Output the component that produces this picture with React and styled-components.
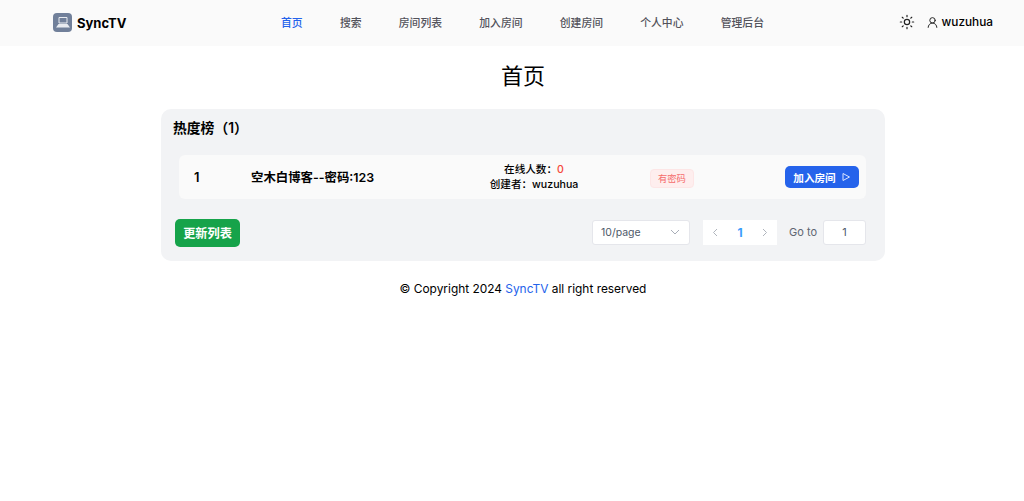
import React from "react";
import styled, { createGlobalStyle } from "styled-components";

const Global = createGlobalStyle`
  html, body { margin: 0; padding: 0; background: #fff; }
  body { font-family: Inter, "Noto Sans CJK SC", "Liberation Sans", sans-serif; color: #000; }
  * { box-sizing: border-box; }
`;
const Page = styled.div`width: 1024px; height: 501px; overflow: hidden;`;
const Header = styled.header`
  height: 46px; background: #fafafa; display: grid;
  grid-template-columns: 1fr auto 1fr; align-items: center; padding: 0 31px 2px 53px;
`;
const Brand = styled.div`display: flex; align-items: center; gap: 5px; font-size: 13px; font-weight: 700; padding-top: 1px;`;
const LogoBox = styled.div`
  width: 19px; height: 19px; border-radius: 4px; background: #71809a;
  display: flex; align-items: center; justify-content: center;
`;
const Nav = styled.nav`display: flex; gap: 37.3px; margin-right: 1px;`;
const NavLink = styled.a`font-size: 10.8px; font-weight: 500; color: ${p => (p.$active ? "#2563eb" : "#52525b")};`;
const Right = styled.div`display: flex; justify-content: flex-end; align-items: center; gap: 11px;`;
const User = styled.div`display: flex; align-items: center; gap: 3px; font-size: 11.8px; font-weight: 500;`;
const Main = styled.main`display: flex; flex-direction: column; align-items: center; padding-left: 22px;`;
const Title = styled.h1`margin: 14px 0 0; font-size: 22px; line-height: 32px; font-weight: 400;`;
const Card = styled.section`
  margin-top: 17px; width: 724px; height: 152px; background: #f2f3f5; border-radius: 10px;
  padding: 10px 19px 0 12px; display: flex; flex-direction: column;
`;
const CardTitle = styled.h2`margin: 0; font-size: 13.8px; line-height: 18px; font-weight: 600;`;
const Row = styled.div`
  margin: 18px 0 0 6px; height: 44px; background: #fafafa; border-radius: 6px;
  display: grid; grid-template-columns: 57px 195px 176px 1fr auto; align-items: center; padding: 0 7px 0 15px;
`;
const Rank = styled.div`font-size: 13px; font-weight: 600;`;
const RoomName = styled.div`font-size: 12.4px; font-weight: 600;`;
const Info = styled.div`text-align: center; font-size: 10.6px; line-height: 15px; font-weight: 500;`;
const Count = styled.span`color: #f5483b;`;
const TagWrap = styled.div`padding-left: 28px;`;
const Tag = styled.span`
  display: inline-block; font-size: 9.3px; line-height: 17px; padding: 0 7px; color: #f56c6c;
  background: #feeeee; border: 1px solid #fde6e6; border-radius: 4px;
`;
const JoinButton = styled.button`
  font: 600 10.6px Inter, "Noto Sans CJK SC", sans-serif; color: #fff; background: #2563eb; border: 0;
  border-radius: 5px; height: 22px; width: 74px; display: flex; align-items: center; justify-content: center; gap: 5px; padding: 0;
`;
const Footer = styled.div`display: flex; align-items: flex-start; justify-content: space-between; margin-top: 20px;`;
const RefreshButton = styled.button`
  margin-left: 2px; font: 600 12.2px Inter, "Noto Sans CJK SC", sans-serif; color: #fff; background: #16a34a; border: 0;
  border-radius: 5px; height: 28px; width: 65px; padding: 0;
`;
const Pager = styled.div`display: flex; align-items: center; height: 26px;`;
const Select = styled.div`
  width: 98px; height: 25px; background: #fff; border: 1px solid #e5e6eb; border-radius: 3px;
  display: flex; align-items: center; justify-content: space-between; padding: 0 9px 0 8px; font-size: 10.5px; color: #4e5969;
`;
const PageNav = styled.div`
  margin-left: 13px; width: 74px; height: 25px; background: #fff; display: flex; align-items: center;
  justify-content: space-between; padding: 0 9px; color: #b0b5bd;
`;
const Current = styled.span`font-size: 12px; font-weight: 700; color: #3b9dfc;`;
const GoLabel = styled.span`margin-left: 12px; font-size: 11px; color: #5f6672;`;
const GoInput = styled.div`
  margin-left: 6px; width: 43px; height: 25px; background: #fff; border: 1px solid #e5e6eb; border-radius: 3px;
  display: flex; align-items: center; justify-content: center; font-size: 11px; color: #4e5969;
`;
const Copy = styled.p`margin: 19px 0 0; font-size: 11.9px; line-height: 18px; font-weight: 400;`;
const CopyLink = styled.span`color: #2563eb;`;

const Stroke = ({ size, children, color = "currentColor" }) => (
  <svg width={size} height={size} viewBox="0 0 24 24" fill="none" stroke={color} strokeWidth="1.8" strokeLinecap="round" strokeLinejoin="round">{children}</svg>
);

export default function App() {
  return (
    <Page>
      <Global />
      <Header>
        <Brand>
          <LogoBox>
            <svg width="14" height="11" viewBox="0 0 14 11"><path d="M3 0.500h8v5.500H3z" fill="none" stroke="#e8ebf0"/><path d="M2.500 7h9L14 10.500H0z" fill="#e8ebf0"/></svg>
          </LogoBox>
          SyncTV
        </Brand>
        <Nav>
          <NavLink $active>首页</NavLink>
          <NavLink>搜索</NavLink>
          <NavLink>房间列表</NavLink>
          <NavLink>加入房间</NavLink>
          <NavLink>创建房间</NavLink>
          <NavLink>个人中心</NavLink>
          <NavLink>管理后台</NavLink>
        </Nav>
        <Right>
          <Stroke size={16} color="#222">
            <circle cx="12" cy="12" r="4" /><path d="M12 2v2M12 20v2M4.900 4.900l1.400 1.400M17.700 17.700l1.400 1.400M2 12h2M20 12h2M4.900 19.100l1.400-1.400M17.700 6.300l1.400-1.400" />
          </Stroke>
          <User>
            <Stroke size={13} color="#222"><circle cx="12" cy="8" r="5" /><path d="M20 21a8 8 0 0 0-16 0" /></Stroke>
            wuzuhua
          </User>
        </Right>
      </Header>
      <Main>
        <Title>首页</Title>
        <Card>
          <CardTitle>热度榜（1）</CardTitle>
          <Row>
            <Rank>1</Rank>
            <RoomName>空木白博客--密码:123</RoomName>
            <Info>
              <div>在线人数：<Count>0</Count></div>
              <div>创建者：wuzuhua</div>
            </Info>
            <TagWrap><Tag>有密码</Tag></TagWrap>
            <JoinButton>加入房间
              <svg width="10" height="10" viewBox="0 0 10 10" fill="none" stroke="#dbe6ff" strokeWidth="1"><path d="M2 1.500 8.500 5 2 8.500z"/></svg>
            </JoinButton>
          </Row>
          <Footer>
            <RefreshButton>更新列表</RefreshButton>
            <Pager>
              <Select>10/page
                <svg width="10" height="6" viewBox="0 0 10 6" fill="none" stroke="#a9aeb8"><path d="M1 1l4 4 4-4"/></svg>
              </Select>
              <PageNav>
                <svg width="6" height="9" viewBox="0 0 6 9" fill="none" stroke="#b0b5bd"><path d="M5 1 1.500 4.500 5 8"/></svg>
                <Current>1</Current>
                <svg width="6" height="9" viewBox="0 0 6 9" fill="none" stroke="#b0b5bd"><path d="M1 1l3.500 3.500L1 8"/></svg>
              </PageNav>
              <GoLabel>Go to</GoLabel>
              <GoInput>1</GoInput>
            </Pager>
          </Footer>
        </Card>
        <Copy>© Copyright 2024 <CopyLink>SyncTV</CopyLink> all right reserved</Copy>
      </Main>
    </Page>
  );
}
